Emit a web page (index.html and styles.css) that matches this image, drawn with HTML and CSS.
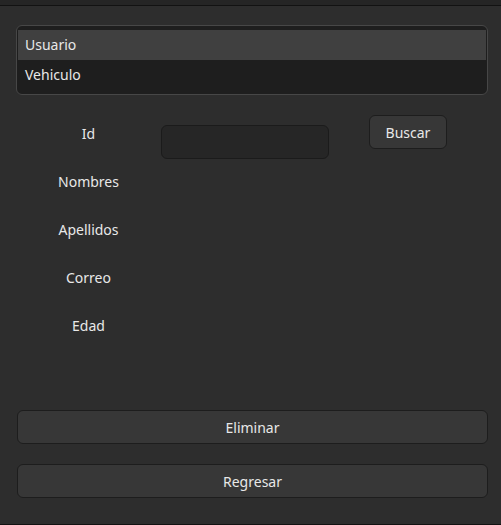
FILE: index.html
```html
<!DOCTYPE html>
<html lang="es">
<head>
<meta charset="utf-8">
<title>Usuarios</title>
<link rel="stylesheet" href="styles.css">
</head>
<body>
<div class="window">
  <div class="titlebar"></div>
  <main class="content">
    <ul class="list">
      <li class="item selected">Usuario</li>
      <li class="item">Vehiculo</li>
    </ul>
    <div class="form">
      <div class="label r1">Id</div>
      <div class="input-wrap r1"><input class="input" type="text"></div>
      <div class="search-wrap r1"><button class="btn small">Buscar</button></div>
      <div class="label r2">Nombres</div>
      <div class="label r3">Apellidos</div>
      <div class="label r4">Correo</div>
      <div class="label r5">Edad</div>
    </div>
    <div class="actions">
      <button class="btn wide">Eliminar</button>
      <button class="btn wide">Regresar</button>
    </div>
  </main>
  <div class="bottomline"></div>
</div>
</body>
</html>
```
FILE: styles.css
```css
* { box-sizing: border-box; }
html, body {
  margin: 0;
  padding: 0;
  background: #2d2d2d;
}
body {
  font-family: "Noto Sans", "Open Sans", sans-serif;
  font-size: 14px;
  color: #e8e8e8;
}
.window {
  width: 501px;
  height: 525px;
  display: flex;
  flex-direction: column;
}
.titlebar {
  height: 6px;
  background: #252525;
  border-bottom: 1px solid #121212;
}
.content {
  flex: 1;
  padding: 19px 13px 0 16px;
  display: flex;
  flex-direction: column;
}
.list {
  list-style: none;
  margin: 0;
  padding: 4px 1px;
  height: 70px;
  background: #1e1e1e;
  border: 1px solid #474747;
  border-radius: 6px;
}
.item {
  height: 30px;
  line-height: 30px;
  padding-left: 7px;
}
.item.selected {
  background: #404040;
}
.form {
  margin-top: 14px;
  display: grid;
  grid-template-columns: 145px 168px 40px 79px;
  grid-template-rows: repeat(5, 48px);
}
.label {
  grid-column: 1;
  display: flex;
  align-items: center;
  justify-content: center;
}
.r1 { grid-row: 1; }
.r2 { grid-row: 2; }
.r3 { grid-row: 3; }
.r4 { grid-row: 4; }
.r5 { grid-row: 5; }
.input-wrap {
  grid-column: 2;
  padding-top: 16px;
}
.input {
  display: block;
  width: 168px;
  height: 34px;
  margin: 0;
  background: #262626;
  border: 1px solid #1b1b1b;
  border-radius: 6px;
  outline: none;
  color: #e8e8e8;
}
.search-wrap {
  grid-column: 4;
  padding-top: 6px;
}
.btn {
  font-family: inherit;
  font-size: 14px;
  color: #e8e8e8;
  background: #373737;
  border: 1px solid #1d1d1d;
  border-radius: 6px;
  height: 34px;
  padding: 0;
  margin: 0;
}
.btn.small {
  width: 78px;
}
.actions {
  margin-top: 61px;
  padding-left: 1px;
  display: flex;
  flex-direction: column;
  gap: 20px;
}
.btn.wide {
  width: 471px;
}
.bottomline {
  height: 1px;
  background: #121212;
}
```
